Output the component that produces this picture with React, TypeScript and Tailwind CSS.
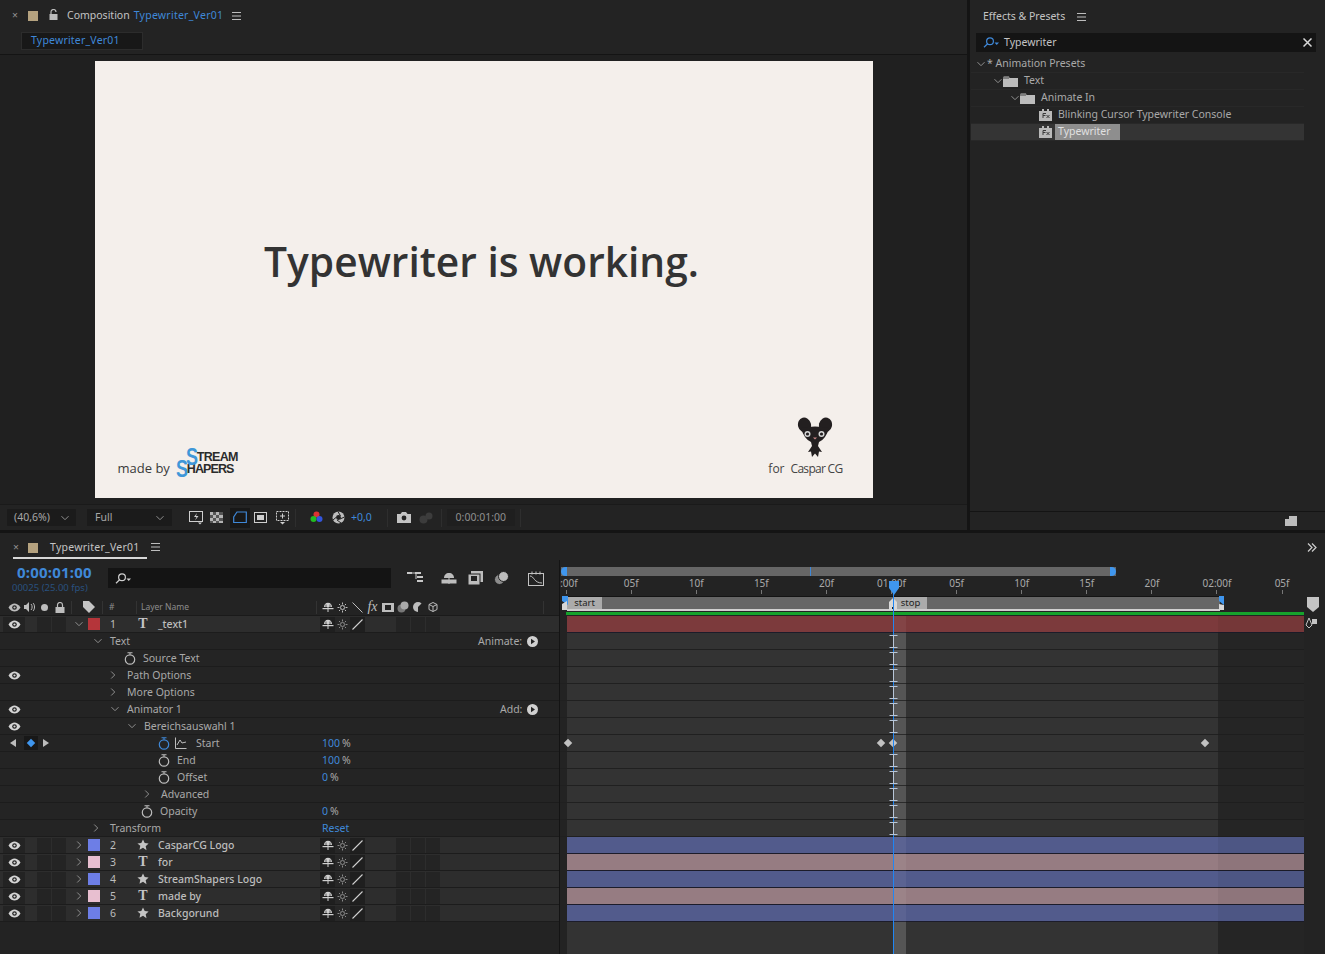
import React from "react";

const Eye = ({ c = "#d6d6d6" }: { c?: string }) => (
  <svg width="13" height="9" viewBox="0 0 13 9" className="shrink-0">
    <path d="M0.5 4.5C2.5 1.5 4.5 0.5 6.5 0.5s4 1 6 4c-2 3-4 4-6 4s-4-1-6-4z" fill={c} />
    <circle cx="6.5" cy="4.5" r="2.3" fill="#222" />
    <circle cx="6.5" cy="4.5" r="1.1" fill={c} />
  </svg>
);
const Chev = ({ open = false, c = "#8f8f8f" }: { open?: boolean; c?: string }) => (
  <svg width="8" height="8" viewBox="0 0 8 8" className="shrink-0" fill="none" stroke={c} strokeWidth="1">
    {open ? <path d="M0.5 2.2L4 5.7 7.5 2.2" /> : <path d="M2.2 0.5L5.7 4 2.2 7.5" />}
  </svg>
);
const Burger = () => (
  <svg width="9" height="8" viewBox="0 0 9 8" className="shrink-0" fill="#bdbdbd">
    <rect y="0" width="9" height="1" /><rect y="3.5" width="9" height="1" /><rect y="7" width="9" height="1" />
  </svg>
);
const Watch = ({ c = "#bdbdbd" }: { c?: string }) => (
  <svg width="12" height="13" viewBox="0 0 12 13" className="shrink-0" fill="none" stroke={c}>
    <circle cx="6" cy="7.5" r="4.7" strokeWidth="1.2" />
    <path d="M3.5 0.8h5M6 1v1.5" strokeWidth="1.1" />
  </svg>
);
const Shy = () => (
  <svg width="12" height="11" viewBox="0 0 12 11" className="shrink-0" fill="#cfcfcf">
    <path d="M2 5C2 2.4 3.7 0.8 6 0.8S10 2.4 10 5z" />
    <rect x="5.5" y="1" width="1" height="9" fill="#cfcfcf" />
    <rect x="0.5" y="6" width="11" height="1.2" />
    <path d="M4 5V2.5M8 5V2.5" stroke="#2c2c2c" strokeWidth="0.7" />
  </svg>
);
const Sun = ({ c = "#8a8a8a" }: { c?: string }) => (
  <svg width="11" height="11" viewBox="0 0 11 11" className="shrink-0" fill="none" stroke={c} strokeWidth="1">
    <circle cx="5.5" cy="5.5" r="2" />
    <path d="M5.5 0.5v2M5.5 8.5v2M0.5 5.5h2M8.5 5.5h2M2 2l1.3 1.3M7.7 7.7L9 9M9 2L7.7 3.3M3.3 7.7L2 9" />
  </svg>
);
const Slash = () => (
  <svg width="11" height="11" viewBox="0 0 11 11" className="shrink-0" stroke="#cfcfcf" strokeWidth="1.1">
    <path d="M0.5 10.5L10.5 0.5" />
  </svg>
);
const Star = () => (
  <svg width="12" height="12" viewBox="0 0 12 12" className="shrink-0" fill="#c4c4c4">
    <path d="M6 0.5l1.7 3.6 3.9 0.5-2.9 2.7 0.8 3.9L6 8.8l-3.5 1.9 0.8-3.9L0.4 4.6l3.9-0.5z" />
  </svg>
);
const Search = ({ c = "#cfcfcf" }: { c?: string }) => (
  <svg width="17" height="11" viewBox="0 0 17 11" className="shrink-0" fill="none" stroke={c} strokeWidth="1.2">
    <circle cx="7" cy="4.3" r="3.4" />
    <path d="M4.6 6.8L1 10.2" />
    <path d="M11.5 5.5h4.5L13.7 8z" fill={c} stroke="none" />
  </svg>
);
const Square = ({ cls }: { cls: string }) => <div className={`shrink-0 ${cls}`} />;

const Preset = () => (
  <svg width="13" height="12" viewBox="0 0 13 12" className="shrink-0">
    <path d="M0 2h3V0h2v2h3V0h2v2h3v10H0z" fill="#b9b9b9" />
    <path d="M4 9V4.5h3M4 6.5h2.5M7.5 6l3 3M10.5 6l-3 3" stroke="#3a3a3a" strokeWidth="1" fill="none" />
  </svg>
);
const Folder = () => (
  <svg width="15" height="11" viewBox="0 0 15 11" className="shrink-0">
    <path d="M0 1.5V11h15V2H6.5L6 0.5H0.8z" fill="#bcbcbc" />
    <path d="M0 2h6" stroke="#232323" strokeWidth="0.8" />
  </svg>
);

const ui = "font-['Noto_Sans',sans-serif]";

const Sep = () => <div className="h-[18px] w-px shrink-0 bg-[#2e2e2e]" />;

function ViewerBar() {
  return (
    <div className="flex h-[26px] items-center border-t border-[#1a1a1a] pl-[7px] text-[10.5px] text-[#a8a8a8]">
      <div className="flex h-[17px] w-[69px] items-center justify-between rounded-[1px] bg-[#1b1b1b] px-[7px]">
        <span>(40,6%)</span><Chev open />
      </div>
      <div className="ml-[11px] flex h-[17px] w-[85px] items-center justify-between bg-[#1b1b1b] px-[8px]">
        <span>Full</span><Chev open />
      </div>
      <div className="ml-[17px] flex items-center">
        <svg width="14" height="14" viewBox="0 0 14 14" fill="none" stroke="#cfcfcf"><rect x="0.5" y="0.5" width="13" height="10" /><path d="M8 2L5 6h2.500L6 9.500 9.500 5H7z" fill="#cfcfcf" stroke="none" /><path d="M9 11.500h4l-2 2z" fill="#cfcfcf" stroke="none" /></svg>
        <svg width="13" height="11" viewBox="0 0 13 11" className="ml-[7px]" fill="#b4b4b4"><rect width="13" height="11" fill="#555" /><path d="M0 0h3v3H0zM6 0h3v3H6zM3 3h3v3H3zM9 3h4v3H9zM0 6h3v3H0zM6 6h3v3H6zM3 9h3v2H3zM9 9h4v2H9z" /></svg>
        <div className="ml-[7px] flex h-[20px] w-[20px] items-center justify-center bg-[#181818]">
          <svg width="14" height="13" viewBox="0 0 14 13" fill="none" stroke="#3f88d8" strokeWidth="1.2"><path d="M0.7 11.500V6L4 1h9.300v10.500z" /></svg>
        </div>
        <svg width="13" height="11" viewBox="0 0 13 11" className="ml-[4px]" fill="none" stroke="#cfcfcf"><rect x="0.5" y="0.5" width="12" height="10" /><rect x="3" y="3" width="7" height="5" fill="#cfcfcf" stroke="none" /></svg>
        <svg width="13" height="14" viewBox="0 0 13 14" className="ml-[9px]" fill="none" stroke="#cfcfcf"><rect x="0.5" y="0.5" width="12" height="9" strokeDasharray="2 1" /><path d="M6.5 2.500v5M4 5h5" /><path d="M4 11h5l-2.500 2.500z" fill="#cfcfcf" stroke="none" /></svg>
      </div>
      <div className="ml-[6px] mr-[14px]"><Sep /></div>
      <svg width="13" height="14" viewBox="0 0 13 14"><circle cx="6.5" cy="3.5" r="3" fill="#d33" /><circle cx="3.5" cy="8" r="3" fill="#2b2" /><circle cx="9.5" cy="8" r="3" fill="#35d" /></svg>
      <svg width="13" height="13" viewBox="0 0 13 13" className="ml-[9px]"><circle cx="6.5" cy="6.5" r="6" fill="#bdbdbd" /><circle cx="6.5" cy="6.5" r="2.4" fill="#232323" /><path d="M6 0.5L8.500 5M12.500 6L8 8M9 12L5 9M1 9l3.500-3" stroke="#232323" /></svg>
      <span className="ml-[6px] text-[#3f88d8]">+0,0</span>
      <div className="ml-[15px] mr-[9px]"><Sep /></div>
      <svg width="14" height="11" viewBox="0 0 14 11"><path d="M0 2h3.500L5 0h4l1.500 2H14v9H0z" fill="#c4c4c4" /><circle cx="7" cy="6" r="2.400" fill="#232323" /></svg>
      <svg width="14" height="12" viewBox="0 0 14 12" className="ml-[8px]"><circle cx="4.500" cy="7.500" r="4" fill="#3c3c3c" /><circle cx="10" cy="4" r="3.500" fill="#3c3c3c" /></svg>
      <div className="ml-[8px] mr-[5px]"><Sep /></div>
      <div className="flex h-[17px] w-[68px] items-center justify-center bg-[#1f1f1f] text-[#8f8f8f]">0:00:01:00</div>
      <div className="ml-[5px]"><Sep /></div>
    </div>
  );
}

function Composition() {
  return (
    <section className="flex h-[530px] w-[967px] shrink-0 flex-col bg-[#232323]">
      <div className="flex h-[32px] items-center text-[10.5px] text-[#c4c4c4]">
        <span className="ml-[12px] w-[7px] text-[#8f8f8f]">×</span>
        <div className="ml-[9px] h-[10px] w-[10px] bg-[#b5a27f]" />
        <svg width="9" height="11" viewBox="0 0 9 11" className="ml-[11px] mb-[3px]" fill="none"><path d="M2 5V3a2.500 2.500 0 0 1 5 0" stroke="#bdbdbd" strokeWidth="1.2" /><rect x="0.5" y="5" width="8" height="6" fill="#bdbdbd" /></svg>
        <span className="ml-[9px]">Composition</span>
        <span className="ml-[4px] tracking-[0.25px] text-[#3f88d8]">Typewriter_Ver01</span>
        <div className="ml-[9px]"><Burger /></div>
      </div>
      <div className="flex h-[23px] items-start border-b border-[#141414] pl-[21px]">
        <div className="flex h-[18px] w-[122px] items-center border border-[#2c2c2c] bg-[#181818] pl-[9px] text-[10.5px] tracking-[0.2px] text-[#3f88d8]">Typewriter_Ver01</div>
      </div>
      <div className="flex flex-1 justify-center bg-[#202020] pt-[6px] pb-[6px]">
        <Artboard />
      </div>
      <ViewerBar />
    </section>
  );
}

function Artboard() {
  return (
    <div className="flex h-[437px] w-[778px] flex-col bg-[#f4efeb]">
      <div className="flex flex-1 items-start justify-center pt-[170px] pr-[4px]">
        <h1 className="text-[40.7px] leading-[60px] font-semibold text-[#333333] font-['Open_Sans',sans-serif]">Typewriter is working.</h1>
      </div>
      <div className="flex items-end justify-between pl-[23px] pr-[30px] pb-[21px]">
        <div className="flex items-end">
          <span className="text-[13px] leading-[18px] text-[#3a3a3a] font-['Open_Sans',sans-serif]">made by</span>
          <div className="ml-[6px] mb-[3px] flex flex-col text-[#2b2b2b] font-['Liberation_Sans',sans-serif]">
            <div className="ml-[10px] flex h-[11px] items-center">
              <span className="w-[11px] origin-left scale-x-75 text-[24px] leading-[11px] font-bold text-[#3f97d8]">S</span>
              <span className="mt-[2px] text-[12.5px] leading-[11px] font-bold tracking-[-0.7px]">TREAM</span>
            </div>
            <div className="mt-[1px] flex h-[11px] items-center">
              <span className="w-[11px] origin-left scale-x-75 text-[24px] leading-[11px] font-bold text-[#3f97d8]">S</span>
              <span className="mt-[1px] text-[12.5px] leading-[11px] font-bold tracking-[-0.9px]">HAPERS</span>
            </div>
          </div>
        </div>
        <div className="flex flex-col items-center">
          <svg width="36" height="43" viewBox="0 0 36 43" className="mb-[1px] ml-[20px]">
            <g fill="#231f20">
              <ellipse cx="7.500" cy="8" rx="6.500" ry="7.500" transform="rotate(-15 7.500 8)" />
              <ellipse cx="28.500" cy="8" rx="6.500" ry="7.500" transform="rotate(15 28.500 8)" />
              <path d="M4 11Q18 8 32 11Q29 22 22 25L21 29L25 35L22 34.500L21 40L18 36.500L15 40L14 34.500L11 35L15 29L14 25Q7 22 4 11z" />
            </g>
            <circle cx="10.500" cy="17" r="3" fill="#d8d8d8" /><circle cx="10.500" cy="17" r="1.600" fill="#231f20" />
            <circle cx="24.500" cy="17" r="3" fill="#d8d8d8" /><circle cx="24.500" cy="17" r="1.600" fill="#231f20" />
            <path d="M16 20.500h4l-2 2z" fill="#c88" />
          </svg>
          <div className="flex items-baseline text-[#444] font-['Open_Sans',sans-serif]">
            <span className="text-[12px] leading-[16px]">for</span>
            <span className="ml-[6px] text-[12px] leading-[16px] tracking-[-0.7px]">Caspar CG</span>
          </div>
        </div>
      </div>
    </div>
  );
}

const PresetRow = ({ cls, children, sel = false }: { cls: string; children: React.ReactNode; sel?: boolean }) => (
  <div className={`flex h-[17px] items-center border-b border-[#282828] text-[10.5px] text-[#a9a9a9] ${cls} ${sel ? "bg-[#343434]" : ""}`}>{children}</div>
);

function Effects() {
  return (
    <section className="flex h-[530px] flex-1 flex-col bg-[#232323]">
      <div className="flex h-[33px] items-center pl-[13px] text-[10.5px] text-[#c4c4c4]">
        <span>Effects &amp; Presets</span>
        <div className="ml-[12px]"><Burger /></div>
      </div>
      <div className="mx-[6px] flex h-[19px] w-[340px] items-center bg-[#141414] pl-[7px] pr-[4px] text-[10.5px] text-[#c4c4c4]">
        <Search c="#3f88d8" />
        <span className="ml-[4px] flex-1">Typewriter</span>
        <svg width="9" height="9" viewBox="0 0 9 9" stroke="#d8d8d8" strokeWidth="1.5"><path d="M0.500 0.500l8 8M8.500 0.500l-8 8" /></svg>
      </div>
      <div className="mt-[4px] ml-[1px] w-[333px]">
        <PresetRow cls="pl-[6px]"><Chev open /><span className="ml-[2px]">* Animation Presets</span></PresetRow>
        <PresetRow cls="pl-[23px]"><Chev open /><div className="ml-[1px]"><Folder /></div><span className="ml-[6px]">Text</span></PresetRow>
        <PresetRow cls="pl-[40px]"><Chev open /><div className="ml-[1px]"><Folder /></div><span className="ml-[6px]">Animate In</span></PresetRow>
        <PresetRow cls="pl-[68px]"><Preset /><span className="ml-[6px]">Blinking Cursor Typewriter Console</span></PresetRow>
        <PresetRow cls="pl-[68px]" sel><Preset /><span className="ml-[3px] bg-[#8e8e8e] pl-[3px] pr-[9px] text-[#e0e0e0]">Typewriter</span></PresetRow>
      </div>
      <div className="mt-auto flex h-[19px] items-center justify-end border-t border-[#141414] pr-[28px]">
        <svg width="12" height="12" viewBox="0 0 12 12"><path d="M4 1h8v10H0V4h4z" fill="#bdbdbd" /></svg>
      </div>
    </section>
  );
}

const Switches = () => (
  <div className="flex items-center">
    <div className="flex h-[15px] w-[15px] items-center justify-center bg-[#1f1f1f]"><Shy /></div>
    <div className="flex h-[15px] w-[15px] items-center justify-center bg-[#272727]"><Sun /></div>
    <div className="flex h-[15px] w-[15px] items-center justify-center bg-[#1f1f1f]"><Slash /></div>
  </div>
);

function LayerRow({ n, color, name, type, open = false }: { n: number; color: string; name: string; type: "T" | "star"; open?: boolean }) {
  return (
    <div className="flex h-[17px] items-center border-b border-[#1c1c1c] bg-[#2d2d2d] pl-[3px] text-[10.5px] text-[#bdbdbd]">
      <div className="flex h-[15px] w-[22px] items-center justify-center bg-[#232323]"><Eye /></div>
      <Square cls="ml-[12px] h-[15px] w-[14px] bg-[#242424]" />
      <Square cls="ml-[1px] h-[15px] w-[14px] bg-[#242424]" />
      <div className="ml-[9px]"><Chev open={open} /></div>
      <Square cls={`ml-[5px] h-[12px] w-[12px] ${color}`} />
      <span className="ml-[10px] w-[24px] translate-y-px">{n}</span>
      <div className="flex w-[18px] items-center justify-center">
        {type === "T" ? <span className="text-[14px] leading-none font-bold text-[#c4c4c4] font-['Liberation_Serif',serif]">T</span> : <Star />}
      </div>
      <span className="ml-[6px] w-[162px] translate-y-px font-medium">{name}</span>
      <Switches />
      <div className="ml-[31px] flex gap-[1px]">
        <Square cls="h-[15px] w-[14px] bg-[#242424]" />
        <Square cls="h-[15px] w-[14px] bg-[#242424]" />
        <Square cls="h-[15px] w-[14px] bg-[#242424]" />
      </div>
    </div>
  );
}

function PropRow({ slot, indent, children, right }: { slot?: React.ReactNode; indent: string; children: React.ReactNode; right?: React.ReactNode }) {
  return (
    <div className="flex h-[17px] items-center border-b border-[#1c1c1c] bg-[#242424] text-[10.5px] text-[#a9a9a9]">
      <div className="flex w-[50px] shrink-0 items-center pl-[8px]">{slot}</div>
      <div className={`flex w-[272px] shrink-0 items-center ${indent}`}>{children}</div>
      {right}
    </div>
  );
}
const Lb = ({ cls, children }: { cls: string; children: React.ReactNode }) => <span className={`translate-y-px ${cls}`}>{children}</span>;
const Val = ({ v }: { v: string }) => (
  <span className="translate-y-px"><span className="text-[#3f88d8]">{v}</span><span className="ml-[2px] text-[#a9a9a9]">%</span></span>
);
const AddBtn = ({ label, cls }: { label: string; cls: string }) => (
  <div className={`flex items-center ${cls}`}>
    <span className="translate-y-px">{label}</span>
    <svg width="11" height="11" viewBox="0 0 11 11" className="ml-[5px]"><circle cx="5.500" cy="5.500" r="5.500" fill="#d0d0d0" /><path d="M4 2.800l4 2.700-4 2.700z" fill="#232323" /></svg>
  </div>
);

const Ibeam = () => (
  <svg width="9" height="13" viewBox="0 0 9 13" stroke="#b8c6d8" fill="none" className="relative z-10 shrink-0">
    <path d="M0.500 0.500h8M0.500 12.500h8M4.500 0.500v12" />
  </svg>
);
const Key = () => <div className="h-[6px] w-[6px] rotate-45 bg-[#c2c2c2]" />;

function Lane() {
  return (
    <div className="flex h-[17px] items-center border-b border-[#202020] pl-[329px]">
      <Ibeam />
    </div>
  );
}
const Bar = ({ cls }: { cls: string }) => <div className={`relative h-[17px] border-b border-[#1c1c2a] ${cls}`} />;

const rulerLabels = ["0:00f", "05f", "10f", "15f", "20f", "01:00f", "05f", "10f", "15f", "20f", "02:00f", "05f"];

const Cell = ({ children }: { children: React.ReactNode }) => <div className="flex w-[15px] shrink-0 items-center justify-center">{children}</div>;

function Timeline() {
  return (
    <section className="flex flex-1 flex-col bg-[#232323]">
      <div className="flex h-[27px] items-start pt-[5px] text-[10.5px] text-[#c4c4c4]">
        <div className="ml-[13px] flex h-[21px] w-[134px] items-center border-b-2 border-[#d8d8d8]">
          <span className="text-[#8f8f8f]">×</span>
          <div className="ml-[9px] h-[10px] w-[10px] bg-[#b5a27f]" />
          <span className="ml-[12px] tracking-[0.25px]">Typewriter_Ver01</span>
        </div>
        <div className="ml-[4px] mt-[5px]"><Burger /></div>
        <svg width="10" height="9" viewBox="0 0 10 9" fill="none" stroke="#cfcfcf" strokeWidth="1.2" className="ml-auto mr-[8px] mt-[5px]"><path d="M1 0.500l4 4-4 4M5 0.500l4 4-4 4" /></svg>
      </div>
      <div className="flex flex-1">
        {/* left column */}
        <div className="flex w-[560px] shrink-0 flex-col border-r border-[#141414]">
          <div className="flex h-[39px] items-start pt-[3px]">
            <div className="ml-[12px] flex w-[84px] flex-col">
              <span className="pl-[5px] text-[15px] leading-[18px] font-bold tracking-[0.2px] text-[#3f88d8]">0:00:01:00</span>
              <span className="mt-[1px] text-[9.5px] leading-[12px] text-[#29517f]">00025 (25.00 fps)</span>
            </div>
            <div className="ml-[12px] mt-[5px] flex h-[20px] w-[283px] items-center bg-[#141414] pl-[7px]"><Search /></div>
            <div className="ml-[16px] mt-[5px] flex h-[20px] items-center">
              <svg width="16" height="14" viewBox="0 0 16 14" fill="#c8c8c8"><rect x="0" y="1" width="5" height="2" /><rect x="8" y="1" width="6" height="2" /><rect x="10" y="5" width="6" height="2" /><rect x="10" y="9" width="6" height="2" /><path d="M5 2h3M9 2v6" stroke="#c8c8c8" /></svg>
              <svg width="16" height="13" viewBox="0 0 16 13" className="ml-[18px]" fill="#bdbdbd"><path d="M3 6c0-3 2-5 5-5s5 2 5 5z" /><rect x="7.500" y="3" width="1" height="9" /><rect x="0.500" y="7.500" width="15" height="4" /></svg>
              <svg width="15" height="14" viewBox="0 0 15 14" className="ml-[11px]" fill="#bdbdbd"><rect x="3" y="0" width="12" height="11" /><rect x="0" y="3" width="12" height="11" stroke="#232323" /><rect x="3" y="5" width="6" height="5" fill="#232323" /></svg>
              <svg width="15" height="14" viewBox="0 0 15 14" className="ml-[11px]"><circle cx="5.500" cy="8.500" r="5" fill="#8d8d8d" stroke="#232323" /><circle cx="9.500" cy="5.500" r="5" fill="#bdbdbd" stroke="#232323" /></svg>
              <svg width="16" height="15" viewBox="0 0 16 15" className="ml-[19px]" fill="none" stroke="#c4c4c4"><rect x="0.500" y="2.500" width="15" height="12" /><path d="M2 5c4 0 4 7 12 7" /><path d="M4 0.500v3M8 0.500v3M12 0.500v3" /></svg>
            </div>
          </div>
          <div className="flex h-[17px] items-center border-b border-[#1a1a1a] pl-[7px] text-[8.5px] text-[#8d8d8d]">
            <Cell><Eye c="#bdbdbd" /></Cell>
            <Cell><svg width="11" height="10" viewBox="0 0 11 10" fill="#bdbdbd"><path d="M0 3h2l3-3v10L2 7H0z" /><path d="M7 2c1.500 1.500 1.500 4.500 0 6M9 1c2 2 2 6 0 8" stroke="#bdbdbd" fill="none" /></svg></Cell>
            <Cell><div className="h-[7px] w-[7px] rounded-full bg-[#bdbdbd]" /></Cell>
            <Cell><svg width="10" height="11" viewBox="0 0 10 11" fill="none"><path d="M2.500 5V3a2.500 2.500 0 0 1 5 0v2" stroke="#bdbdbd" strokeWidth="1.200" /><rect x="0.500" y="5" width="9" height="6" fill="#bdbdbd" /></svg></Cell>
            <div className="ml-[4px] h-[13px] w-px bg-[#333]" />
            <svg width="12" height="12" viewBox="0 0 12 12" className="ml-[11px]" fill="#c4c4c4"><path d="M0 0h6l6 6-6 6-6-6z" /></svg>
            <div className="ml-[7px] h-[13px] w-px bg-[#333]" />
            <span className="ml-[6px] w-[27px]">#</span>
            <div className="h-[13px] w-px bg-[#333]" />
            <span className="ml-[4px] w-[175px]">Layer Name</span>
            <div className="h-[13px] w-px bg-[#333]" />
            <div className="ml-[3px] flex items-center">
              <Cell><Shy /></Cell>
              <Cell><Sun c="#bdbdbd" /></Cell>
              <Cell><svg width="11" height="11" viewBox="0 0 11 11" stroke="#bdbdbd"><path d="M0.500 0.500l10 10" /></svg></Cell>
              <Cell><span className="text-[14px] leading-none italic text-[#bdbdbd] font-['Liberation_Serif',serif]">fx</span></Cell>
              <Cell><svg width="12" height="11" viewBox="0 0 12 11" fill="#bdbdbd"><path d="M0 1h12v9H0z" /><rect x="3" y="3" width="6" height="5" fill="#232323" /></svg></Cell>
              <Cell><svg width="12" height="12" viewBox="0 0 12 12"><circle cx="4.500" cy="7.500" r="4" fill="#777" /><circle cx="7.500" cy="4.500" r="4" fill="#aaa" /></svg></Cell>
              <Cell><svg width="10" height="10" viewBox="0 0 10 10"><circle cx="5" cy="5" r="5" fill="#bdbdbd" /><path d="M5 5L9 1A5 5 0 0 1 5 10z" fill="#232323" /></svg></Cell>
              <Cell><svg width="10" height="10" viewBox="0 0 10 10" fill="none" stroke="#bdbdbd"><path d="M5 0.500l4 2v5l-4 2-4-2v-5zM1 2.500l4 2 4-2M5 4.500v5" /></svg></Cell>
            </div>
            <div className="ml-[103px] h-[13px] w-px bg-[#333]" />
          </div>

          <LayerRow n={1} color="bg-[#b5353a]" name="_text1" type="T" open />
          <PropRow indent="pl-[44px]" right={<AddBtn label="Animate:" cls="ml-[156px]" />}>
            <Chev open /><Lb cls="ml-[8px]">Text</Lb>
          </PropRow>
          <PropRow indent="pl-[74px]"><Watch /><Lb cls="ml-[7px]">Source Text</Lb></PropRow>
          <PropRow slot={<Eye />} indent="pl-[59px]"><Chev /><Lb cls="ml-[10px]">Path Options</Lb></PropRow>
          <PropRow indent="pl-[59px]"><Chev /><Lb cls="ml-[10px]">More Options</Lb></PropRow>
          <PropRow slot={<Eye />} indent="pl-[61px]" right={<AddBtn label="Add:" cls="ml-[178px]" />}><Chev open /><Lb cls="ml-[8px]">Animator 1</Lb></PropRow>
          <PropRow slot={<Eye />} indent="pl-[78px]"><Chev open /><Lb cls="ml-[8px]">Bereichsauswahl 1</Lb></PropRow>
          <PropRow
            slot={
              <div className="ml-[2px] flex items-center">
                <div className="h-0 w-0 border-y-[4px] border-r-[6px] border-y-transparent border-r-[#bdbdbd]" />
                <div className="ml-[8px] flex h-[14px] w-[14px] items-center justify-center bg-[#181818]"><div className="h-[6px] w-[6px] rotate-45 bg-[#3f96ee]" /></div>
                <div className="ml-[5px] h-0 w-0 border-y-[4px] border-l-[6px] border-y-transparent border-l-[#bdbdbd]" />
              </div>
            }
            indent="pl-[108px]"
            right={<Val v="100" />}
          >
            <Watch c="#3f88d8" />
            <svg width="12" height="12" viewBox="0 0 12 12" className="ml-[5px]" fill="none" stroke="#bdbdbd"><path d="M0.500 0.500v11h11" /><path d="M2 8l3-5 2 3 4-1" /></svg>
            <Lb cls="ml-[9px]">Start</Lb>
          </PropRow>
          <PropRow indent="pl-[108px]" right={<Val v="100" />}><Watch /><Lb cls="ml-[7px]">End</Lb></PropRow>
          <PropRow indent="pl-[108px]" right={<Val v="0" />}><Watch /><Lb cls="ml-[7px]">Offset</Lb></PropRow>
          <PropRow indent="pl-[93px]"><Chev /><Lb cls="ml-[10px]">Advanced</Lb></PropRow>
          <PropRow indent="pl-[91px]" right={<Val v="0" />}><Watch /><Lb cls="ml-[7px]">Opacity</Lb></PropRow>
          <PropRow indent="pl-[42px]" right={<span className="translate-y-px text-[#3f88d8]">Reset</span>}><Chev /><Lb cls="ml-[10px]">Transform</Lb></PropRow>

          <LayerRow n={2} color="bg-[#6d7ee6]" name="CasparCG Logo" type="star" />
          <LayerRow n={3} color="bg-[#e8bfd0]" name="for" type="T" />
          <LayerRow n={4} color="bg-[#6d7ee6]" name="StreamShapers Logo" type="star" />
          <LayerRow n={5} color="bg-[#e8bfd0]" name="made by" type="T" />
          <LayerRow n={6} color="bg-[#6d7ee6]" name="Backgorund" type="star" />
          <div className="flex-1 bg-[#232323]" />
        </div>

        {/* right column */}
        <div className="relative flex flex-1 flex-col">
          <div className="relative h-[36px] shrink-0">
            <div className="mt-[7px] ml-[1px] flex h-[9px] w-[555px] items-center bg-[#666666]">
              <div className="h-[9px] w-[6px] rounded-l-full bg-[#3f96ee]" />
              <div className="ml-[243px] h-[9px] w-px bg-[#3f88d8]" />
              <div className="ml-auto h-[9px] w-[6px] rounded-r-full bg-[#3f96ee]" />
            </div>
            <div className="flex h-[20px] w-[745px] overflow-hidden text-[10px] leading-[14px] text-[#a9a9a9]">
              <div className="-ml-[26.500px] flex shrink-0">
                {rulerLabels.map((l, i) => (
                  <div key={i} className="flex w-[65.1px] shrink-0 flex-col items-center">
                    <span>{l}</span>
                    <div className="h-[4px] w-px bg-[#777]" />
                  </div>
                ))}
              </div>
            </div>
          </div>
          <div className="flex h-[20px] shrink-0 flex-col">
            <div className="ml-[7px] flex h-[15px] w-[653px] items-start gap-[292px] border-t border-b-2 border-t-[#141414] border-b-[#cfcfcf] bg-[#666666] text-[9.5px] leading-[11px] text-[#222]">
              <span className="h-[12px] w-[35px] bg-[#ababab] text-center">start</span>
              <span className="h-[12px] w-[33px] bg-[#ababab] text-center">stop</span>
            </div>
            <div className="mt-[1px] ml-[6px] h-[3px] w-[738px] bg-[#16a32c]" />
          </div>

          <div className="relative flex-1 bg-[#333333]">
            <div className="absolute inset-y-0 left-[658px] w-[86px] bg-[#272727]" />
            <div className="absolute inset-y-0 left-0 w-[7px] bg-[#232323]" />
            <div className="absolute inset-y-0 left-[744px] right-0 bg-[#232323]" />
            <div className="absolute inset-y-0 left-[333px] w-[13px] bg-[#4c4c4c]" />
            <div className="relative ml-[7px] w-[737px]">
              <Bar cls="bg-[#7c3a3c]" />
              <div className="-ml-[7px]">
                <Lane /><Lane /><Lane /><Lane /><Lane /><Lane />
                <div className="flex h-[17px] items-center border-b border-[#202020] pl-[5px]">
                  <Key />
                  <div className="ml-[307px]"><Key /></div>
                  <div className="ml-[6px]"><Key /></div>
                  <div className="ml-[306px]"><Key /></div>
                </div>
                <Lane /><Lane /><Lane /><Lane /><Lane />
              </div>
              <Bar cls="bg-[#525b8c]" />
              <Bar cls="bg-[#967c82]" />
              <Bar cls="bg-[#525b8c]" />
              <Bar cls="bg-[#967c82]" />
              <Bar cls="bg-[#525b8c]" />
            </div>
            <div className="absolute inset-y-0 left-[658px] w-[86px] bg-black/5" />
            <div className="absolute inset-y-0 left-[333px] w-[13px] bg-white/5" />
          </div>

          {/* markers, playhead and side controls lie over the lanes */}
          <svg width="8" height="15" viewBox="0 0 8 15" className="absolute top-[36px] left-[1px]"><path d="M1 0h6v9L1 5z" fill="#3f96ee" /><path d="M1 14V8l5-3v9z" fill="#d8d8d8" /></svg>
          <svg width="8" height="15" viewBox="0 0 8 15" className="absolute top-[36px] left-[329px]"><path d="M0 14V6l4-4 4 4v8z" fill="#d8d8d8" /><rect x="3" y="11" width="2" height="2" fill="#222" /></svg>
          <svg width="8" height="15" viewBox="0 0 8 15" className="absolute top-[36px] left-[658px]"><path d="M1 0h5v9L1 5z" fill="#3f96ee" /><path d="M1 14V8l5 1v5z" fill="#d8d8d8" /></svg>
          <div className="absolute top-[30px] bottom-0 left-[333px] z-[5] w-px bg-[#1f86f5]" />
          <svg width="12" height="14" viewBox="0 0 12 14" className="absolute top-[21px] left-[327.500px] z-[5]"><path d="M1 0h10v7l-5 7-5-7z" fill="#3f96ee" /></svg>
          <svg width="12" height="15" viewBox="0 0 12 15" className="absolute top-[37px] left-[747px]"><path d="M0 0h12v10l-6 5-6-5z" fill="#c4c4c4" /></svg>
          <svg width="12" height="12" viewBox="0 0 12 12" className="absolute top-[57px] left-[745px]" fill="none" stroke="#c4c4c4"><path d="M4 1L1 8l3 3 3-3z" /><rect x="7" y="2" width="5" height="5" fill="#c4c4c4" stroke="none" /></svg>
        </div>
      </div>
    </section>
  );
}

export default function App() {
  return (
    <div className={`flex h-[954px] w-[1325px] flex-col gap-[3px] overflow-hidden bg-[#141414] ${ui}`}>
      <div className="flex gap-[3px]">
        <Composition />
        <Effects />
      </div>
      <Timeline />
    </div>
  );
}
